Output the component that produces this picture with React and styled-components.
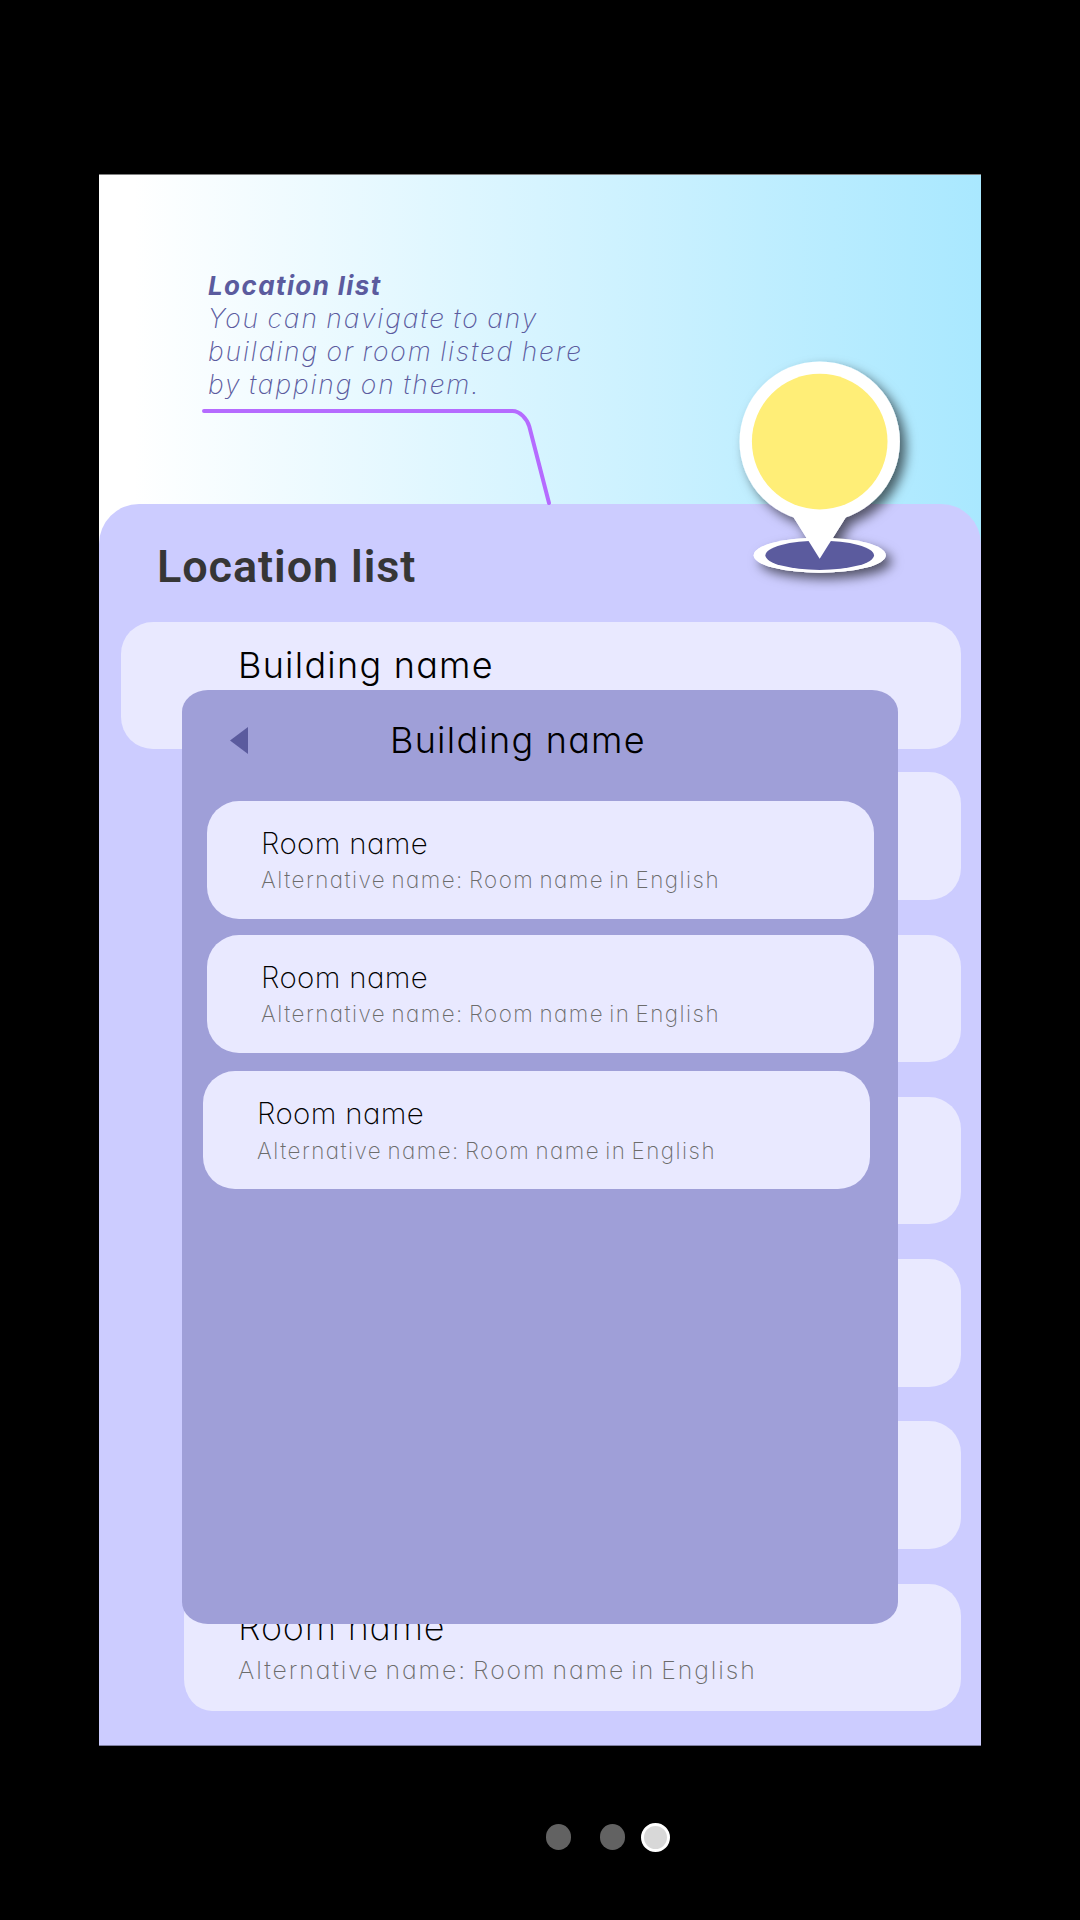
import React from "react";
import styled, { createGlobalStyle } from "styled-components";

const GlobalStyle = createGlobalStyle`
  * { box-sizing: border-box; }
  html, body { margin: 0; background: #000; }
  body { font-family: Inter, "Liberation Sans", sans-serif; font-feature-settings: "cv11" 1; }
  h1, h2, h3, p { margin: 0; font-weight: inherit; }
`;

const Page = styled.div`
  width: 1080px;
  height: 1920px;
  padding-top: 174px;
  display: flex;
  flex-direction: column;
  align-items: center;
  overflow: hidden;
  background: #000;
`;

const Screen = styled.main`
  position: relative;
  width: 882px;
  height: 1572px;
  display: flex;
  flex-direction: column;
  border-top: 1px solid #808080;
  border-bottom: 1px solid #8080a2;
  background: linear-gradient(90deg, #fff 4%, #a9e8ff 100%);
`;

const Header = styled.header`
  position: relative;
  height: 329px;
  flex: none;
  padding: 94px 0 0 109px;
`;

const CalloutTitle = styled.h2`
  color: #5b5b9e;
  font-size: 26px;
  line-height: 33px;
  font-style: italic;
  font-weight: 660;
  letter-spacing: 1.4px;
  white-space: nowrap;
`;

const CalloutText = styled.p`
  color: #5b5b9e;
  font-size: 26.5px;
  line-height: 33.2px;
  font-style: italic;
  font-weight: 200;
  letter-spacing: 1.87px;
  word-spacing: -1.8px;
  white-space: nowrap;
`;

const Pointer = styled.svg`
  position: absolute;
  left: 103px;
  top: 232px;
  z-index: 1;
`;

const Panel = styled.section`
  flex: 1;
  display: flex;
  flex-direction: column;
  border-radius: 40px 40px 0 0;
  background: #ccccff;
`;

const PanelTitle = styled.h1`
  height: 118px;
  flex: none;
  padding: 37px 0 0 58px;
  color: #363636;
  font-family: Roboto, "Liberation Sans", sans-serif;
  font-size: 45px;
  line-height: 52px;
  font-weight: 570;
  letter-spacing: 0.9px;
`;

const List = styled.div`
  display: flex;
  flex-direction: column;
  align-items: flex-end;
  gap: 34.9px;
  padding-right: 20px;
`;

const Card = styled.article`
  width: ${(p) => (p.$wide ? 840 : 777)}px;
  height: 127.4px;
  flex: none;
  margin-bottom: ${(p) => (p.$wide ? -12 : 0)}px;
  padding: ${(p) => (p.$wide ? "21px 0 0 117px" : "21px 0 0 54px")};
  border-radius: ${(p) => (p.$wide ? "32px" : "28px 32px 32px 28px / 32px")};
  background: #e9e9ff;
`;

const CardTitle = styled.h3`
  color: #000;
  font-size: 36px;
  line-height: 44px;
  font-weight: ${(p) => (p.$room ? 240 : 260)};
  letter-spacing: ${(p) => (p.$room ? 0.8 : 1.25)}px;
  white-space: nowrap;
`;

const CardNote = styled.p`
  padding-top: 6px;
  color: #6c6c6c;
  font-size: 24.8px;
  line-height: 30px;
  font-weight: 210;
  letter-spacing: 1.9px;
  word-spacing: -2.8px;
  white-space: nowrap;
`;

const Dialog = styled.section`
  position: absolute;
  left: 83px;
  top: 515px;
  width: 716px;
  height: 934px;
  border-radius: 26px / 22px;
  background: #9f9fd8;
`;

const DialogHeader = styled.header`
  height: 111px;
  display: flex;
  align-items: flex-start;
  padding: 37px 0 0 48px;
`;

const DialogTitle = styled.h2`
  margin: -9px 0 0 142px;
  font-size: 36px;
  line-height: 44px;
  font-weight: 260;
  letter-spacing: 1.25px;
  white-space: nowrap;
`;

const Rooms = styled.div`
  display: flex;
  flex-direction: column;
  gap: 16.5px;
  padding-left: 25px;
`;

const Room = styled.article`
  width: 667px;
  height: 117.5px;
  margin: ${(p) => (p.$shifted ? "2px 0 0 -4px" : "0")};
  padding: 24px 0 0 54px;
  border-radius: 32px;
  background: #e9e9ff;
`;

const RoomName = styled.h3`
  color: #000;
  font-size: 29.5px;
  line-height: 36px;
  font-weight: 220;
  letter-spacing: 0.35px;
`;

const RoomNote = styled.p`
  padding-top: ${(p) => (p.$shifted ? 5 : 4)}px;
  color: #6c6c6c;
  font-size: 22.4px;
  line-height: 30px;
  font-weight: 210;
  letter-spacing: 1.48px;
  word-spacing: -2.6px;
  white-space: nowrap;
`;

const Marker = styled.svg`
  position: absolute;
  left: 621px;
  top: 165px;
`;

const Pager = styled.nav`
  align-self: flex-start;
  height: 30px;
  margin: 76px 0 0 546px;
  display: flex;
  align-items: center;
`;

const Dot = styled.span`
  width: ${(p) => (p.$active ? 29 : 25.4)}px;
  height: ${(p) => (p.$active ? 29 : 25.4)}px;
  margin-right: ${(p) => p.$gap || 0}px;
  border: ${(p) => (p.$active ? "3px solid #fff" : "none")};
  border-radius: 50%;
  background: ${(p) => (p.$active ? "#d8d8d8" : "#626262")};
`;

const NOTE = "Alternative name: Room name in English";
const rooms = [false, false, true];

export default function App() {
  return (
    <>
      <GlobalStyle />
      <Page>
        <Screen>
          <Header>
            <CalloutTitle>Location list</CalloutTitle>
            <CalloutText>
              You can navigate to any
              <br />
              building or room listed here
              <br />
              by tapping on them.
            </CalloutText>
            <Pointer width="352" height="102" viewBox="0 0 352 102" fill="none">
              <path
                d="M2 4H310.5C318 4 325 12 327.3 19.5L347 96"
                stroke="#b56bff"
                strokeWidth="4"
                strokeLinecap="round"
              />
            </Pointer>
          </Header>
          <Panel>
            <PanelTitle>Location list</PanelTitle>
            <List>
              <Card $wide>
                <CardTitle>Building name</CardTitle>
              </Card>
              <Card />
              <Card />
              <Card />
              <Card />
              <Card />
              <Card>
                <CardTitle $room>Room name</CardTitle>
                <CardNote>{NOTE}</CardNote>
              </Card>
            </List>
          </Panel>
          <Dialog>
            <DialogHeader>
              <svg width="18" height="27" viewBox="0 0 18 27">
                <path d="M18 0V27L0 13.5Z" fill="#5b5b9e" />
              </svg>
              <DialogTitle>Building name</DialogTitle>
            </DialogHeader>
            <Rooms>
              {rooms.map((shifted, i) => (
                <Room key={i} $shifted={shifted}>
                  <RoomName>Room name</RoomName>
                  <RoomNote $shifted={shifted}>{NOTE}</RoomNote>
                </Room>
              ))}
            </Rooms>
          </Dialog>
          <Marker width="230" height="260" viewBox="720 340 230 260">
            <defs>
              <filter id="shadow" x="-20%" y="-20%" width="150%" height="170%">
                <feDropShadow dx="6" dy="6" stdDeviation="6" floodColor="#000" floodOpacity="0.6" />
              </filter>
            </defs>
            <g filter="url(#shadow)">
              <ellipse cx="819.7" cy="555.2" rx="66" ry="17.5" fill="#fff" />
            </g>
            <g filter="url(#shadow)">
              <circle cx="819.7" cy="441.6" r="80.2" fill="#fff" />
              <path d="M790 511.5H849.4L819.7 558.7Z" fill="#fff" />
            </g>
            {/* The base sits above the pin's shadow, the tip above the base */}
            <ellipse cx="819.7" cy="555.2" rx="66" ry="17.5" fill="#fff" />
            <ellipse cx="819.7" cy="555.3" rx="54.3" ry="14.6" fill="#5b5b9e" />
            <path d="M790 511.5H849.4L819.7 558.7Z" fill="#fff" />
            <circle cx="819.7" cy="441.6" r="67.8" fill="#ffee77" />
          </Marker>
        </Screen>
        <Pager>
          <Dot $gap={28.6} />
          <Dot $gap={16} />
          <Dot $active />
        </Pager>
      </Page>
    </>
  );
}
